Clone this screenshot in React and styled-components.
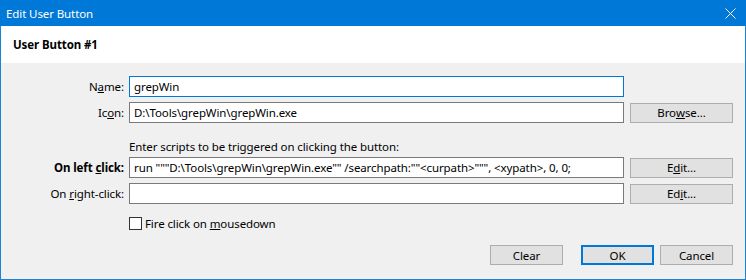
import React from 'react'
import styled, { createGlobalStyle } from 'styled-components'

const GlobalStyle = createGlobalStyle`
  html, body {
    margin: 0;
    padding: 0;
    background: #f0f0f0;
  }
  * {
    box-sizing: border-box;
  }
`

const FONT = `"Noto Sans", "Open Sans", sans-serif`

const Window = styled.div`
  width: 746px;
  height: 280px;
  display: flex;
  flex-direction: column;
  border: 1px solid #1883d7;
  border-top: none;
  background: #f0f0f0;
  font-family: ${FONT};
  font-size: 11.5px;
  letter-spacing: -0.1px;
  color: #000;
`

const TitleBar = styled.div`
  height: 26px;
  margin: 0 -1px;
  background: #0078d7;
  color: #fff;
  display: flex;
  align-items: center;
  justify-content: space-between;
  padding: 0 10px 0 6px;
  font-size: 11.5px;
`

const CloseButton = styled.div`
  width: 12px;
  height: 12px;
  display: flex;
  align-items: center;
  justify-content: center;
`

const Header = styled.div`
  height: 37px;
  background: #fff;
  display: flex;
  align-items: center;
  padding-left: 12px;
  font-weight: bold;
`

const Body = styled.div`
  flex: 1;
  padding: 13px 12px 0 0;
  display: flex;
  flex-direction: column;
`

const Row = styled.div`
  display: flex;
  align-items: center;
  height: 21px;
  margin-top: ${p => p.$gap || 0}px;
`

const Label = styled.div`
  width: 123px;
  margin-right: 5px;
  text-align: right;
  font-weight: ${p => (p.$bold ? 'bold' : 'normal')};
  white-space: nowrap;
`

const TextBox = styled.input`
  width: 495px;
  height: 21px;
  padding: 0 4px;
  border: 1px solid ${p => (p.$focused ? '#0078d7' : '#7a7a7a')};
  background: #fff;
  font-family: ${FONT};
  font-size: 11.5px;
  letter-spacing: -0.1px;
  color: #000;
  outline: none;
`

const Button = styled.div`
  width: ${p => p.$w || 103}px;
  height: 20px;
  margin-left: ${p => p.$ml || 0}px;
  background: #e1e1e1;
  border: ${p => (p.$default ? '2px solid #0078d7' : '1px solid #adadad')};
  display: flex;
  align-items: center;
  justify-content: center;
`

const Note = styled.div`
  margin: 16px 0 3px 128px;
  line-height: 15px;
`

const CheckRow = styled.div`
  display: flex;
  align-items: center;
  height: 13px;
  margin: 13px 0 0 128px;
  gap: 3px;
`

const CheckBox = styled.div`
  width: 13px;
  height: 13px;
  border: 1px solid #333;
  background: #fff;
`

const Footer = styled.div`
  display: flex;
  justify-content: flex-end;
  margin-top: 15px;
  gap: 6px;
`

const Key = styled.span`
  text-decoration: underline;
`

function CloseIcon() {
  return (
    <svg width="11" height="11" viewBox="0 0 11 11">
      <path d="M0.5 0.5 L10.5 10.5 M10.5 0.5 L0.5 10.5" stroke="#fff" strokeWidth="1" />
    </svg>
  )
}

const script = 'run """D:\\Tools\\grepWin\\grepWin.exe"" /searchpath:""<curpath>""", <xypath>, 0, 0;'

export default function App() {
  return (
    <>
      <GlobalStyle />
      <Window>
        <TitleBar>
          <span>Edit User Button</span>
          <CloseButton><CloseIcon /></CloseButton>
        </TitleBar>
        <Header>User Button #1</Header>
        <Body>
          <Row>
            <Label>N<Key>a</Key>me:</Label>
            <TextBox $focused readOnly value="grepWin" />
          </Row>
          <Row $gap={5}>
            <Label>Ic<Key>o</Key>n:</Label>
            <TextBox readOnly value="D:\Tools\grepWin\grepWin.exe" />
            <Button $ml={6}>Bro<Key>w</Key>se...</Button>
          </Row>
          <Note>Enter scripts to be triggered on clicking the button:</Note>
          <Row>
            <Label $bold>On left <Key>c</Key>lick:</Label>
            <TextBox readOnly value={script} />
            <Button $ml={6}>E<Key>d</Key>it...</Button>
          </Row>
          <Row $gap={5}>
            <Label>On <Key>r</Key>ight-click:</Label>
            <TextBox readOnly value="" />
            <Button $ml={6}>Ed<Key>i</Key>t...</Button>
          </Row>
          <CheckRow>
            <CheckBox />
            <span>Fire click on <Key>m</Key>ousedown</span>
          </CheckRow>
          <Footer>
            <Button $w={73}>Clear</Button>
            <Button $w={73} $ml={12} $default>OK</Button>
            <Button $w={73}>Cancel</Button>
          </Footer>
        </Body>
      </Window>
    </>
  )
}
